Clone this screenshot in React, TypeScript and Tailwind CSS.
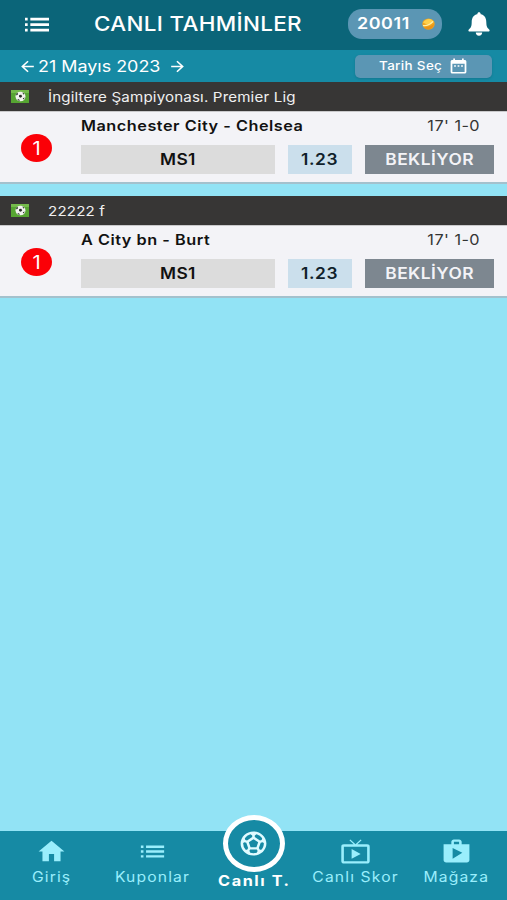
import type { ReactNode } from "react"
import type { IconType } from "react-icons"
import {
  MdArrowBack,
  MdArrowForward,
  MdDateRange,
  MdHome,
  MdList,
  MdLiveTv,
  MdShop,
  MdSportsSoccer,
} from "react-icons/md"
import { IoIosNotifications } from "react-icons/io"

type Prediction = {
  id: number
  league: string
  teams: string
  score: string
  pick: string
  odds: string
  status: string
}

const predictions: Prediction[] = [
  {
    id: 1,
    league: "İngiltere Şampiyonası. Premier Lig",
    teams: "Manchester City - Chelsea",
    score: "17' 1-0",
    pick: "MS1",
    odds: "1.23",
    status: "BEKLİYOR",
  },
  {
    id: 2,
    league: "22222 f",
    teams: "A City bn - Burt",
    score: "17' 1-0",
    pick: "MS1",
    odds: "1.23",
    status: "BEKLİYOR",
  },
]

function Wide({ children, className = "" }: { children: ReactNode; className?: string }) {
  return <span className={`inline-block scale-x-[1.12] whitespace-nowrap ${className}`}>{children}</span>
}

function PitchIcon() {
  return (
    <svg viewBox="0 0 18 13" className="h-[13px] w-[18px] shrink-0">
      <rect width="18" height="13" fill="#56a532" />
      <path d="M0 0h18v3H0z" fill="#74bb4b" />
      <ellipse cx="9.5" cy="6.5" rx="5" ry="4.8" fill="#f1f3ee" />
      <path d="M8.2 5l2-.3 1 1.6-1.3 1.5-1.9-.7zM5 4l1.5-1.2.5 1.4-1.3 1.3zM11.5 2.3l2 1.6-1.4.7zM13.7 7.5l-1 2-.9-1.2zM6.5 9l1.7.4.6 1.6-1.8-.7z" fill="#272d27" />
    </svg>
  )
}

function Header() {
  return (
    <header className="flex h-[50px] shrink-0 items-center bg-[#0b6579] pl-[21px] text-white">
      <MdList preserveAspectRatio="none" className="-mt-[2px] h-[33px] w-[32px] shrink-0" />
      <h1 className="-mt-[3px] ml-[41px] w-[208px] text-[20px] font-medium tracking-[0.3px]">
        <Wide className="origin-left">CANLI TAHMİNLER</Wide>
      </h1>
      <div className="-mt-[3px] ml-[46px] flex h-[30px] w-[94px] items-center rounded-[14px] bg-[#5b96b4] pl-[9px]">
        <div className="-mt-[1px] w-[65px] text-[16px] font-semibold tracking-[0.5px]">
          <Wide className="origin-left">20011</Wide>
        </div>
        <svg viewBox="0 0 13 12" className="h-[12px] w-[13px]">
          <ellipse cx="6.5" cy="6" rx="6.2" ry="5.6" fill="#f2a51d" />
          <path d="M1 4.5Q4 0 9 1.2L12 4 5 6.5z" fill="#ffd04b" />
          <path d="M1 7.5q5 1 10-4" fill="none" stroke="#fff0a5" strokeWidth="1.2" />
          <path d="M2 9q5 1 10-3-1 5-5.5 5.6Q3 11.5 2 9z" fill="#e8931a" />
        </svg>
      </div>
      <IoIosNotifications preserveAspectRatio="none" className="-mt-[2px] ml-[20px] h-[30px] w-[34px] shrink-0" />
    </header>
  )
}

function DateBar() {
  return (
    <div className="flex h-[32px] shrink-0 items-center bg-[#168aa4] pl-[18px] pr-[15px] text-white">
      <MdArrowBack preserveAspectRatio="none" className="h-[17px] w-[19px]" />
      <div className="ml-[1px] w-[130px] text-[16px]">
        <Wide className="origin-left">21 Mayıs 2023</Wide>
      </div>
      <MdArrowForward preserveAspectRatio="none" className="h-[17px] w-[19px]" />
      <button className="ml-auto flex h-[23px] w-[137px] items-center rounded-[5px] bg-[#5b96b4] pl-[24px] shadow">
        <div className="w-[69px] text-left text-[12px] font-medium tracking-[0.3px]">
          <Wide className="origin-left">Tarih Seç</Wide>
        </div>
        <MdDateRange preserveAspectRatio="none" className="h-[18px] w-[21px]" />
      </button>
    </div>
  )
}

function PredictionCard({ item }: { item: Prediction }) {
  return (
    <section className="mb-[12px]">
      <div className="flex h-[29px] items-center bg-[#373635] pl-[11px] text-[13.5px] text-[#f0f0f0]">
        <PitchIcon />
        <Wide className="ml-[19px] mt-[2px] origin-left tracking-[0.14px]">{item.league}</Wide>
      </div>
      <div className="flex h-[73px] border-b-2 border-[#a3c1cd] border-t border-t-[#c9c9cb] bg-[#f3f3f7] pr-[13px]">
        <div className="ml-[21px] mt-[22px] flex h-[28px] w-[31px] items-center justify-center rounded-[50%] bg-[#fb0007] text-[18px] text-white">
          <Wide>1</Wide>
        </div>
        <div className="ml-[29px] flex-1">
          <div className="flex h-[28px] items-center justify-between pr-[14px] text-[14.5px] text-[#111]">
            <Wide className="origin-left font-semibold tracking-[0.47px]">{item.teams}</Wide>
            <Wide className="origin-right tracking-[0.4px] text-[#333]">{item.score}</Wide>
          </div>
          <div className="mt-[5px] flex h-[29px] items-stretch gap-[13px] text-[15.5px] font-semibold text-[#111]">
            <div className="flex flex-1 items-center justify-center bg-[#dcdcdc]">
              <Wide className="-ml-[1px] tracking-[0.3px]">{item.pick}</Wide>
            </div>
            <div className="flex w-[64px] items-center justify-center bg-[#cbdfec] text-[#111f2b]">
              <Wide className="tracking-[0.5px]">{item.odds}</Wide>
            </div>
            <div className="flex w-[129px] items-center justify-center bg-[#7d8790] text-[#f3f3f7]">
              <Wide className="tracking-[0.4px]">{item.status}</Wide>
            </div>
          </div>
        </div>
      </div>
    </section>
  )
}

function Tab({ icon: Icon, label }: { icon: IconType; label: string }) {
  return (
    <div className="flex w-[101.4px] flex-col items-center pt-[6px] text-[#9aeefc]">
      <Icon preserveAspectRatio="none" className="ml-[1px] h-[29px] w-[31px]" />
      <div className="ml-[1px] mt-[1px] text-[14px] leading-[20px] tracking-[1px]">
        <Wide>{label}</Wide>
      </div>
    </div>
  )
}

function BottomBar() {
  return (
    <nav className="flex h-[69px] shrink-0 bg-[#168aa4]">
      <Tab icon={MdHome} label="Giriş" />
      <Tab icon={MdList} label="Kuponlar" />
      <div className="-mt-[16px] flex w-[101.4px] flex-col items-center text-white">
        <div className="ml-[1px] flex h-[57px] w-[62px] shrink-0 items-center justify-center rounded-[50%] border-[5px] border-white bg-[#168aa4]">
          <MdSportsSoccer preserveAspectRatio="none" className="h-[29px] w-[31px] text-[#e0fbff]" />
        </div>
        <div className="-mt-[1px] ml-[1px] text-[14.5px] font-bold leading-[20px] tracking-[1.4px]">
          <Wide>Canlı T.</Wide>
        </div>
      </div>
      <Tab icon={MdLiveTv} label="Canlı Skor" />
      <Tab icon={MdShop} label="Mağaza" />
    </nav>
  )
}

export default function App() {
  return (
    <div className="flex h-[900px] w-[507px] flex-col overflow-hidden bg-[#92e3f5] font-['Inter','Liberation_Sans',sans-serif]">
      <Header />
      <DateBar />
      <main className="flex-1">
        {predictions.map((item) => (
          <PredictionCard key={item.id} item={item} />
        ))}
      </main>
      <BottomBar />
    </div>
  )
}
